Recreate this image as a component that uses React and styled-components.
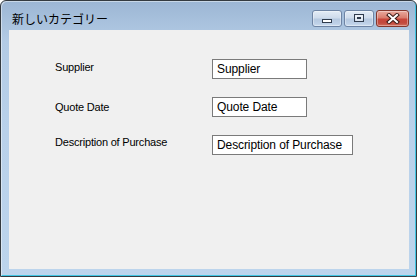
import React from 'react';
import styled, { createGlobalStyle } from 'styled-components';

const GlobalStyle = createGlobalStyle`
  html, body {
    margin: 0;
    padding: 0;
    background: #ffffff;
  }
  * {
    box-sizing: border-box;
  }
`;

const Window = styled.div`
  width: 417px;
  height: 277px;
  display: flex;
  flex-direction: column;
  border: 1px solid #343a40;
  border-radius: 6px 6px 0 0;
  background: linear-gradient(to bottom, #9cb6d4 0px, #b3cbe5 40px, #b9d1ea 130px, #bcd4ec 100%);
  box-shadow: inset 1px 1px 0 rgba(255, 255, 255, 0.45), inset -1px -1px 0 #41c6e3;
  padding: 0 7px 7px 8px;
  overflow: hidden;
`;

const TitleBar = styled.div`
  height: 29px;
  display: flex;
  align-items: flex-start;
  justify-content: space-between;
  padding: 0 0 0 3px;
`;

const Title = styled.div`
  padding-top: 11px;
  font-family: "Noto Sans CJK JP", "Noto Sans", sans-serif;
  font-size: 12px;
  line-height: 14px;
  color: #000000;
`;

const Buttons = styled.div`
  display: flex;
  gap: 2px;
  margin-top: 9px;
`;

const CaptionButton = styled.div`
  width: ${(p) => p.$w}px;
  height: 17px;
  display: flex;
  align-items: center;
  justify-content: center;
  border-radius: 3px;
  border: 1px solid ${(p) => (p.$close ? '#83372d' : '#6e84a4')};
  background: ${(p) =>
    p.$close
      ? 'linear-gradient(to bottom, #e9aa9e 0%, #da7d6e 45%, #c8463a 55%, #c24a3e 80%, #d2705f 100%)'
      : 'linear-gradient(to bottom, #e3ecf6 0%, #cfdcec 45%, #b6c9e0 55%, #bccfe6 80%, #cbdcef 100%)'};
  box-shadow: inset 0 0 0 1px rgba(255, 255, 255, 0.35);
`;

const Client = styled.div`
  flex: 1;
  background: #f0f0f0;
  padding: 29px 0 0 46px;
  display: flex;
  flex-direction: column;
  gap: 18px;
`;

const Row = styled.div`
  display: flex;
  align-items: flex-start;
  height: 20px;
`;

const Label = styled.div`
  width: 157px;
  padding-top: ${(p) => p.$offset}px;
  font-family: "Liberation Sans", Arial, sans-serif;
  font-size: 11px;
  line-height: 13px;
  letter-spacing: -0.2px;
  color: #000000;
`;

const Field = styled.input`
  width: ${(p) => p.$w}px;
  height: 20px;
  border: 1px solid #7a7a7a;
  background: #ffffff;
  padding: 0 0 0 4px;
  margin: 0;
  font-family: "Liberation Sans", Arial, sans-serif;
  font-size: 12px;
  letter-spacing: -0.1px;
  color: #000000;
  outline: none;
`;

const MinIcon = () => (
  <svg width="12" height="12" viewBox="0 0 12 12">
    <rect x="1.5" y="6.5" width="9" height="3" fill="#ffffff" stroke="#2f3b4c" strokeWidth="1" />
  </svg>
);

const MaxIcon = () => (
  <svg width="12" height="11" viewBox="0 0 12 11">
    <rect x="1.5" y="1.5" width="9" height="7" fill="none" stroke="#2f3b4c" strokeWidth="1" />
    <rect x="3" y="3" width="6" height="4" fill="none" stroke="#ffffff" strokeWidth="1" />
    <rect x="4.5" y="4.5" width="3" height="1" fill="none" stroke="#2f3b4c" strokeWidth="1" />
  </svg>
);

const CloseIcon = () => (
  <svg width="14" height="11" viewBox="0 0 14 11">
    <path d="M3 2 L11 9 M11 2 L3 9" stroke="#3b1a16" strokeWidth="4" strokeLinecap="square" />
    <path d="M3 2 L11 9 M11 2 L3 9" stroke="#ffffff" strokeWidth="2" strokeLinecap="square" />
  </svg>
);

const fields = [
  { label: 'Supplier', w: 95, offset: 2 },
  { label: 'Quote Date', w: 95, offset: 4 },
  { label: 'Description of Purchase', w: 141, offset: 1 },
];

const App = () => (
  <>
    <GlobalStyle />
    <Window>
      <TitleBar>
        <Title>新しいカテゴリー</Title>
        <Buttons>
          <CaptionButton $w={30}>
            <MinIcon />
          </CaptionButton>
          <CaptionButton $w={30}>
            <MaxIcon />
          </CaptionButton>
          <CaptionButton $w={33} $close>
            <CloseIcon />
          </CaptionButton>
        </Buttons>
      </TitleBar>
      <Client>
        {fields.map((f) => (
          <Row key={f.label}>
            <Label $offset={f.offset}>{f.label}</Label>
            <Field $w={f.w} defaultValue={f.label} readOnly />
          </Row>
        ))}
      </Client>
    </Window>
  </>
);

export default App;
